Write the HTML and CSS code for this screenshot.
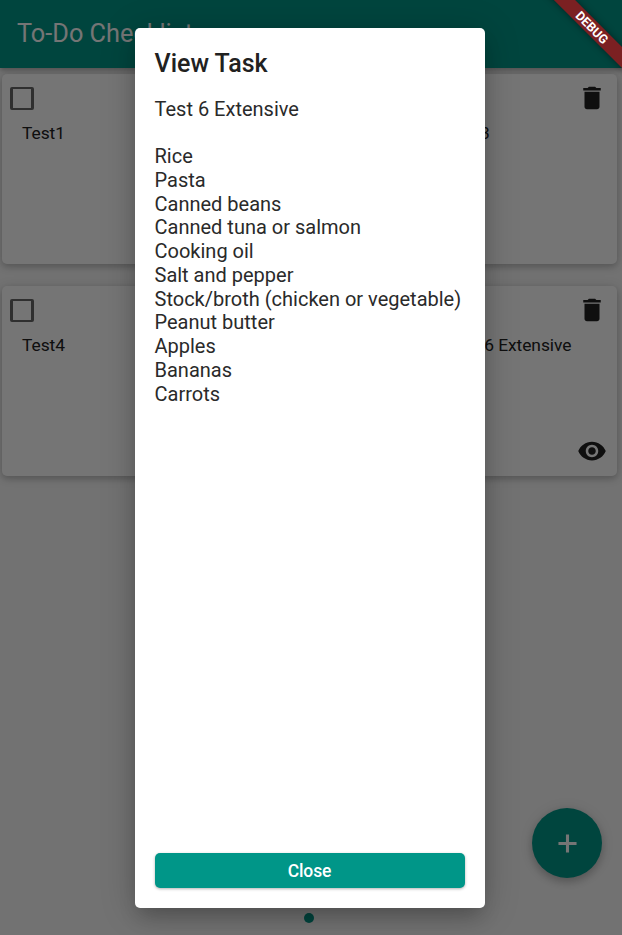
FILE: index.html
```html
<!DOCTYPE html>
<html lang="en">
<head>
<meta charset="utf-8">
<title>To-Do Checklist</title>
<link rel="stylesheet" href="styles.css">
</head>
<body>
<svg class="sprite" width="0" height="0">
  <symbol id="trash" viewBox="0 0 24 24"><path d="M6 19c0 1.100.9 2 2 2h8c1.100 0 2-.9 2-2V7H6v12zM19 4h-3.500l-1-1h-5l-1 1H5v2h14V4z"/></symbol>
  <symbol id="eye" viewBox="0 0 24 24"><path d="M12 4.500C7 4.500 2.730 7.610 1 12c1.730 4.390 6 7.500 11 7.500s9.270-3.110 11-7.500c-1.730-4.390-6-7.500-11-7.500zM12 17c-2.760 0-5-2.240-5-5s2.240-5 5-5 5 2.240 5 5-2.240 5-5 5zm0-8c-1.660 0-3 1.340-3 3s1.340 3 3 3 3-1.340 3-3-1.340-3-3-3z"/></symbol>
  <symbol id="plus" viewBox="0 0 24 24"><path d="M19 13.200h-5.800V19h-2.400v-5.800H5v-2.400h5.800V5h2.400v5.800H19z"/></symbol>
</svg>
<div class="app">
  <header class="bar"><h1>To-Do Checklist</h1></header>
  <main class="grid">
    <article class="card"><div class="tools"><span class="box"></span><svg class="icon"><use href="#trash"/></svg></div><p>Test1</p></article>
    <article class="card"><div class="tools"><span class="box"></span><svg class="icon"><use href="#trash"/></svg></div></article>
    <article class="card"><div class="tools"><span class="box"></span><svg class="icon"><use href="#trash"/></svg></div><p>Test3</p></article>
    <article class="card"><div class="tools"><span class="box"></span><svg class="icon"><use href="#trash"/></svg></div><p>Test4</p></article>
    <article class="card"><div class="tools"><span class="box"></span><svg class="icon"><use href="#trash"/></svg></div></article>
    <article class="card"><div class="tools"><span class="box"></span><svg class="icon"><use href="#trash"/></svg></div><p>Test 6 Extensive</p><svg class="icon view"><use href="#eye"/></svg></article>
  </main>
  <footer class="pager"><span class="dot"></span></footer>
  <button class="fab" aria-label="Add"><svg><use href="#plus"/></svg></button>
</div>
<div class="scrim">
  <section class="dialog">
    <h2>View Task</h2>
    <div class="content">Test 6 Extensive

Rice
Pasta
Canned beans
Canned tuna or salmon
Cooking oil
Salt and pepper
Stock/broth (chicken or vegetable)
Peanut butter
Apples
Bananas
Carrots</div>
    <button class="close">Close</button>
  </section>
</div>
<div class="corner"><div class="ribbon">DEBUG</div></div>
</body>
</html>
```
FILE: styles.css
```css
* { box-sizing: border-box; margin: 0; }
body { height: 935px; overflow: hidden; font-family: Roboto, sans-serif; color: #212121; }
.sprite { position: absolute; }
.app { height: 935px; display: flex; flex-direction: column; background: #f8f8f8; }
.bar { height: 68px; flex: none; display: flex; align-items: center; padding: 0 17px 2px; background: #009688; color: #fff; box-shadow: 0 2px 5px rgba(0,0,0,.3); z-index: 1; }
.bar h1 { font-size: 25.3px; font-weight: 400; }
.grid { flex: 1; display: grid; grid-template-columns: repeat(3, 1fr); grid-auto-rows: 190px; gap: 22px; align-content: start; padding: 6px 5px 0 2px; }
.card { display: flex; flex-direction: column; background: #fff; border-radius: 5px; padding: 9px 9px 10px 8px; box-shadow: 0 3px 6px rgba(0,0,0,.16), 0 1px 12px rgba(0,0,0,.14); }
.tools { display: flex; justify-content: space-between; align-items: center; height: 30px; }
.box { width: 24px; height: 23px; border: 2.500px solid #666; border-width: 2px 3px; border-radius: 2px; }
.icon { width: 30px; height: 30px; fill: #212121; flex: none; }
.tools .icon { margin-right: 1px; }
.view { margin: auto 1px 0 auto; }
.card p { margin: 9px 0 0 12px; font-size: 17.4px; line-height: 22px; white-space: nowrap; letter-spacing: -.05px; }
.pager { height: 34px; display: flex; justify-content: center; align-items: center; padding-right: 4px; }
.dot { width: 10px; height: 10px; border-radius: 50%; background: #009688; }
.fab { position: absolute; left: 532px; top: 808px; width: 70px; height: 70px; border: 0; border-radius: 50%; padding: 0; background: #009688; display: flex; align-items: center; justify-content: center; box-shadow: 0 4px 8px rgba(0,0,0,.2), 0 1px 14px rgba(0,0,0,.1); }
.fab svg { width: 31px; height: 31px; fill: #fff; }
.scrim { position: absolute; inset: 0; z-index: 5; display: flex; justify-content: center; align-items: flex-start; padding: 28px 3px 0 0; background: rgba(0,0,0,.54); }
.dialog { width: 350px; height: 880px; display: flex; flex-direction: column; padding: 21px 20px 20px; background: #fff; border-radius: 5px; box-shadow: 0 12px 20px -4px rgba(0,0,0,.2), 0 4px 36px rgba(0,0,0,.2); }
.dialog h2 { font-size: 25px; line-height: 30px; font-weight: 500; }
.content { flex: 1; margin-top: 18.500px; font-size: 20px; line-height: 23.75px; white-space: pre; color: #2a2a2a; }
.close { height: 35px; border: 0; border-radius: 5px; background: #009688; color: #fff; font: 500 17.5px Roboto, sans-serif; letter-spacing: -.1px; box-shadow: 0 1px 3px rgba(0,0,0,.3); }
.corner { position: absolute; top: 0; right: 0; width: 100px; height: 100px; overflow: hidden; z-index: 9; }
.ribbon { position: absolute; left: 10px; top: 20px; width: 120px; height: 15px; transform: rotate(45deg); background: #7b2022; color: #fff; text-align: center; font-size: 12.5px; line-height: 15px; font-weight: 700; box-shadow: 0 0 7px rgba(0,0,0,.45); }
```
